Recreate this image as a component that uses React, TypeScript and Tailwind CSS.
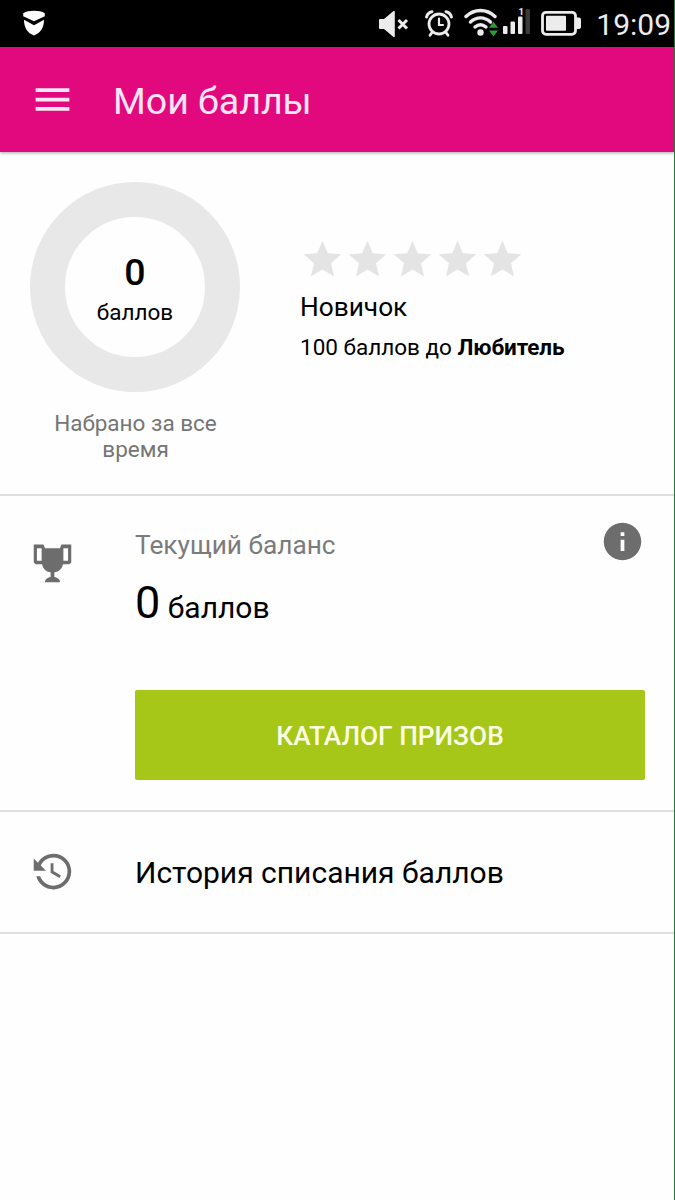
import React from 'react';
import { MdInfo, MdMenu, MdStar } from 'react-icons/md';

interface IconProps {
  className?: string;
}

const ShieldIcon: React.FC<IconProps> = ({ className }) => (
  <svg viewBox="0 0 22 26" className={className} fill="currentColor">
    <path d="M.2 3.2C3 1.500 7 .8 11 .8s8 .7 10.800 2.400v3L11 11.200.2 6.200z" />
    <path d="M1 9.700 11 15.300l10-5.600c0 7.600-3 13-10 15.700C4 22.700 1 17.300 1 9.700z" />
  </svg>
);

const MutedIcon: React.FC<IconProps> = ({ className }) => (
  <svg viewBox="0 0 30 28" className={className} fill="currentColor">
    <path d="M1 9h4l9.500-8a.8.8 0 0 1 1.300.6v24.800a.8.8 0 0 1-1.300.6L5 19H1a1 1 0 0 1-1-1v-8a1 1 0 0 1 1-1z" />
    <path d="m19.500 10 8.500 8.500m0-8.500-8.500 8.500" stroke="currentColor" strokeWidth="3" />
  </svg>
);

const AlarmIcon: React.FC<IconProps> = ({ className }) => (
  <svg viewBox="0 0 28 28" className={className} fill="none" stroke="currentColor" strokeWidth="2.800" strokeLinecap="round">
    <circle cx="14" cy="14" r="10" />
    <path d="M14 8.500v6.500h4" strokeWidth="2.200" />
    <path d="M1.600 7C2.200 4.200 4 2.300 7 1.700M26.400 7C25.800 4.200 24 2.300 21 1.700" strokeWidth="3" />
    <path d="m7 22.500-2 2.800M21 22.500l2 2.800" />
  </svg>
);

const WifiIcon: React.FC<IconProps> = ({ className }) => (
  <svg viewBox="0 0 36 30" className={className} fill="none">
    <g stroke="currentColor" strokeWidth="3.400" strokeLinecap="round">
      <path d="M2 9.500c8.500-8 20.500-8 29 0" />
      <path d="M6.500 15c6-5.500 14-5.500 20 0" />
      <path d="M11 20c3.500-3 7.500-3 11 0" />
    </g>
    <circle cx="16.500" cy="25.500" r="3.200" fill="currentColor" />
    <path d="m29.500 14.800 4.500 6h-9zM29.500 29.400l4.500-6h-9z" fill="#2f9a35" />
  </svg>
);

const SignalIcon: React.FC<IconProps> = ({ className }) => (
  <svg viewBox="0 0 28 28" className={className} fill="currentColor">
    <rect x="0" y="19" width="4.500" height="8" rx="1" />
    <rect x="7.500" y="14.500" width="4.500" height="12.500" rx="1" />
    <rect x="15" y="9.500" width="4.500" height="17.500" rx="1" />
    <rect x="22.500" y="2" width="4.500" height="25" rx="1" fill="#3a3a3a" />
    <text x="15.500" y="8" fontSize="9.500" fontWeight="700" fontFamily="Roboto, sans-serif">1</text>
  </svg>
);

const BatteryIcon: React.FC<IconProps> = ({ className }) => (
  <svg viewBox="0 0 41 26" className={className}>
    <rect x="1.500" y="2.300" width="33" height="22" rx="3.500" fill="none" stroke="currentColor" strokeWidth="2.800" />
    <path d="M35 7.500h3c1.500 0 2 1 2 2.500v6.500c0 1.500-.5 2.500-2 2.500h-3z" fill="currentColor" />
    <rect x="5" y="5.800" width="20" height="15" rx="1" fill="currentColor" />
  </svg>
);

const TrophyIcon: React.FC<IconProps> = ({ className }) => (
  <svg viewBox="0 0 24 24" className={className} fill="currentColor" fillRule="evenodd">
    <path d="M2 1.900h5.200l.8 2h8l.8-2H22v9.500l-1 1h-3.400c-.5 2.300-2.100 4-4.600 4.300v2.500c1.800.4 3 1.200 3 2.800H8c0-1.600 1.200-2.400 3-2.800v-2.500c-2.500-.3-4.100-2-4.600-4.300H3l-1-1zM3.700 3.900v6.600h2.500V3.900zM17.800 3.900v6.600h2.500V3.900z" />
  </svg>
);

const HistoryIcon: React.FC<IconProps> = ({ className }) => (
  <svg viewBox="0 0 24 24" className={className} fill="currentColor">
    <path d="M11,7V12.110L15.710,14.900L16.500,13.620L12.500,11.250V7M12.500,2C8.970,2 5.910,3.920 4.270,6.770L2,4.500V11H8.500L5.750,8.250C6.960,5.730 9.500,4 12.500,4A7.500,7.500 0 0,1 20,11.500A7.500,7.500 0 0,1 12.500,19C9.230,19 6.470,16.910 5.440,14H3.340C4.440,18.030 8.110,21 12.500,21C17.740,21 22,16.750 22,11.500A9.500,9.500 0 0,0 12.500,2Z" />
  </svg>
);

const StatusBar: React.FC = () => (
  <div className="flex h-[47px] items-start justify-between bg-black pl-[23px] pr-[4px] text-[#ececec]">
    <ShieldIcon className="mt-[10px] h-[26px] w-[22px] text-white" />
    <div className="flex items-start">
      <MutedIcon className="mt-[10px] h-[28px] w-[30px]" />
      <AlarmIcon className="ml-[16px] mt-[10px] h-[28px] w-[28px]" />
      <WifiIcon className="ml-[11px] mt-[7px] h-[30px] w-[36px]" />
      <SignalIcon className="ml-[3px] mt-[7px] h-[28px] w-[28px]" />
      <BatteryIcon className="ml-[10px] mt-[10px] h-[26px] w-[41px]" />
      <span className="ml-[14px] mt-[2px] text-[30px] leading-[45px]">19:09</span>
    </div>
  </div>
);

const Header: React.FC = () => (
  <header className="flex h-[105px] items-center bg-[#e2097f] pl-[30px] text-[#ffe6f5] shadow-[0_1px_3px_rgba(0,0,0,0.35)]">
    <MdMenu className="h-[45px] w-[45px]" />
    <h1 className="ml-[38px] pt-[2px] text-[37.5px] leading-[44px]">Мои баллы</h1>
  </header>
);

const Progress: React.FC = () => (
  <section className="flex h-[344px] border-b-2 border-[#dedede] pl-[30px] pt-[30px]">
    <div className="w-[210px] text-center">
      <div className="flex h-[210px] flex-col items-center rounded-full border-[35px] border-[#e8e8e8] pt-[33px]">
        <span className="text-[37.5px] font-medium leading-[44px]">0</span>
        <span className="mt-[5px] text-[22.5px] leading-[26px]">баллов</span>
      </div>
      <p className="mt-[18px] pl-[11px] pr-[10px] text-[22.5px] leading-[26px] text-[#757575]">Набрано за все время</p>
    </div>
    <div className="ml-[60px] pt-[55px]">
      <div className="flex text-[#e4e4e4]">
        {[1, 2, 3, 4, 5].map((n) => (
          <MdStar key={n} className="h-[45px] w-[45px]" />
        ))}
      </div>
      <p className="mt-[10px] text-[26.25px] leading-[30px]">Новичок</p>
      <p className="mt-[12px] text-[22.5px] leading-[26px]">
        100 баллов до <b className="font-bold tracking-[-0.1px]">Любитель</b>
      </p>
    </div>
  </section>
);

const Balance: React.FC = () => (
  <section className="flex h-[316px] border-b-2 border-[#dedede] px-[30px] pt-[22px]">
    <TrophyIcon className="mt-[23px] h-[45px] w-[45px] text-[#6d6d6d]" />
    <div className="ml-[60px] flex-1">
      <div className="flex items-start justify-between">
        <p className="mt-[12px] text-[26.25px] leading-[30px] text-[#7b7b7b]">Текущий баланс</p>
        <MdInfo className="mt-px h-[45px] w-[45px] text-[#6d6d6d]" />
      </div>
      <p className="mt-[13px] text-[30px] leading-[52px]">
        <span className="text-[45px]">0</span> баллов
      </p>
      <button className="mt-[56px] h-[90px] w-full rounded-[2px] bg-[#a6c618] pt-[4px] text-[26.25px] font-medium text-[#fbffe2]">
        КАТАЛОГ ПРИЗОВ
      </button>
    </div>
  </section>
);

const HistoryRow: React.FC = () => (
  <section className="flex h-[122px] items-center border-b-2 border-[#dedede] pl-[30px]">
    <HistoryIcon className="h-[45px] w-[45px] text-[#6d6d6d]" />
    <span className="ml-[60px] pt-[2px] text-[30px] leading-[36px]">История списания баллов</span>
  </section>
);

export default function App() {
  return (
    <div className="relative h-[1200px] w-[675px] overflow-hidden bg-[#fefefe] font-['Roboto',sans-serif] text-black">
      <StatusBar />
      <Header />
      <main>
        <Progress />
        <Balance />
        <HistoryRow />
      </main>
      {/* thin green line along the right screen edge */}
      <div className="absolute bottom-0 right-0 top-0 w-px bg-[#227a33]" />
    </div>
  );
}
